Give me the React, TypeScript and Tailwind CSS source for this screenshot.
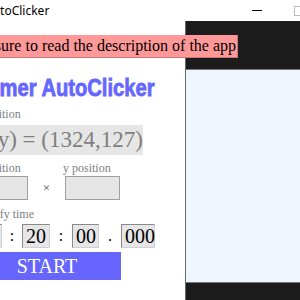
import React from "react";

const serif = { fontFamily: '"Liberation Serif", "DejaVu Serif", serif' };

const TimeBox = ({ value, w }: { value: string; w: string }) => (
  <div
    className={`${w} h-[24px] bg-[#e6e6e6] border border-t-[#8a8a8a] border-l-[#8a8a8a] border-r-[#d0d0d0] border-b-[#d0d0d0] text-[20px] leading-[22px] text-black pl-[3px] whitespace-nowrap`}
  >
    {value}
  </div>
);

export default function App() {
  return (
    <div className="w-[300px] h-[300px] overflow-hidden bg-white flex flex-col whitespace-nowrap">
      {/* title bar */}
      <div className="h-[21px] shrink-0 flex items-center">
        <span
          className="-ml-[15px] text-[12px] text-black"
          style={{ fontFamily: '"Noto Sans", "Open Sans", sans-serif' }}
        >
          AutoClicker
        </span>
        <div className="ml-auto flex items-center gap-[32px]">
          <div className="w-[10px] h-px bg-black" />
          <div className="w-[10px] h-[10px] border border-[#bbb] -mr-[4px]" />
        </div>
      </div>

      <div className="flex flex-1 min-h-0">
        {/* left form */}
        <div className="w-[185px] shrink-0 relative z-10" style={serif}>
          <div className="-ml-[27px] flex flex-col items-start w-[212px]">
            <div className="mt-[14px] ml-0 h-[23px] bg-[#ff9999] border-r border-b border-[#c77] pl-0 pr-[1px] text-[16px] leading-[22px] text-black">
              Be sure to read the description of the app
            </div>

            <div
              className="mt-[16px] ml-[9px] text-[24px] leading-[28px] font-bold text-[#6666ff] scale-x-[0.84] origin-left [-webkit-text-stroke:0.8px_#6666ff]"
              style={{ fontFamily: '"Liberation Sans", Arial, sans-serif' }}
            >
              Timer AutoClicker
            </div>

            <div className="mt-[4px] text-[12px] leading-[16px] text-[#808080]">x position</div>

            <div className="mt-[3px] -ml-[6px] w-[176px] h-[30px] bg-[#e6e6e6] text-[23px] leading-[30px] text-[#7f7f7f]">
              (x, y) = (1324,127)
            </div>

            <div className="mt-[5px] flex text-[12px] leading-[16px] text-[#808080]">
              <span className="w-[90px]">x position</span>
              <span>y position</span>
            </div>

            <div className="flex items-center">
              <div className="w-[55px] h-[24px] bg-[#e6e6e6] border border-[#a0a0a0]" />
              <span className="w-[37px] text-center text-[13px] text-[#555]">×</span>
              <div className="w-[55px] h-[24px] bg-[#e6e6e6] border border-[#a0a0a0]" />
            </div>

            <div className="mt-[6px] text-[12px] leading-[16px] text-[#808080]">Specify time</div>

            <div className="mt-[2px] flex items-center text-[20px] text-black">
              <TimeBox value="00" w="w-[29px]" />
              <span className="w-[20px] text-center text-[16px]">:</span>
              <TimeBox value="20" w="w-[28px]" />
              <span className="w-[22px] text-center text-[16px]">:</span>
              <TimeBox value="00" w="w-[27px]" />
              <span className="w-[22px] text-center text-[16px]">.</span>
              <TimeBox value="000" w="w-[34px]" />
            </div>

            <button className="mt-[4px] w-[148px] h-[28px] bg-[#6666ff] text-white text-[20px] leading-[28px] text-center">
              START
            </button>
          </div>
        </div>

        {/* right panel */}
        <div className="flex-1 flex flex-col border-l border-[#666]">
          <div className="h-[49px] shrink-0 bg-[#1c1c1c] border-b border-[#777]" />
          <div className="flex-1 bg-[#f0f6fe]" />
          <div className="h-[18px] shrink-0 bg-[#1c1c1c] border-t border-[#777]" />
        </div>
      </div>
    </div>
  );
}
